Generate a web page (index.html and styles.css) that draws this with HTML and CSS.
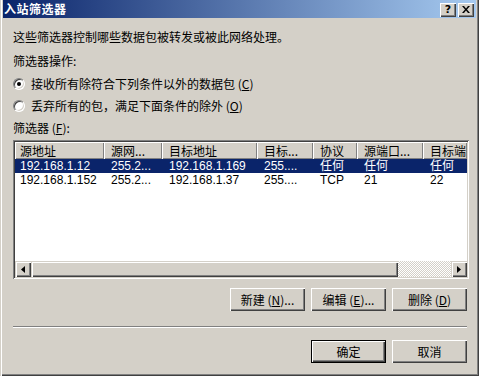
FILE: index.html
```html
<!DOCTYPE html>
<html lang="zh-CN">
<head>
    <meta charset="utf-8">
    <title>入站筛选器</title>
    <link rel="stylesheet" href="styles.css">
</head>
<body>
<div class="window">
    <div class="titlebar">
        <span class="title">入站筛选器</span>
        <div class="caption-btns">
            <span class="cbtn help">?</span>
            <span class="cbtn">
                <svg width="8" height="7" viewBox="0 0 8 7"><path d="M0 0h2l2 2.5 2-2.5h2l-3 3.5 3 3.5h-2l-2-2.5-2 2.5h-2l3-3.5z" fill="#000"/></svg>
            </span>
        </div>
    </div>

    <div class="content">
        <p class="line intro">这些筛选器控制哪些数据包被转发或被此网络处理。</p>
        <p class="line label">筛选器操作:</p>
        <div class="radio-row first">
            <span class="radio checked"></span>
            <span>接收所有除符合下列条件以外的数据包 (<u>C</u>)</span>
        </div>
        <div class="radio-row">
            <span class="radio"></span>
            <span>丢弃所有的包，满足下面条件的除外 (<u>O</u>)</span>
        </div>
        <p class="line list-label">筛选器 (<u>F</u>):</p>

        <div class="listbox">
            <div class="client">
                <div class="lv-head">
                    <span class="hcell">源地址</span>
                    <span class="hcell">源网...</span>
                    <span class="hcell">目标地址</span>
                    <span class="hcell">目标...</span>
                    <span class="hcell">协议</span>
                    <span class="hcell">源端口...</span>
                    <span class="hcell">目标端</span>
                </div>
                <div class="lv-row selected">
                    <span>192.168.1.12</span>
                    <span>255.2...</span>
                    <span>192.168.1.169</span>
                    <span>255....</span>
                    <span>任何</span>
                    <span>任何</span>
                    <span>任何</span>
                </div>
                <div class="lv-row">
                    <span>192.168.1.152</span>
                    <span>255.2...</span>
                    <span>192.168.1.37</span>
                    <span>255....</span>
                    <span>TCP</span>
                    <span>21</span>
                    <span>22</span>
                </div>
                <div class="lv-fill"></div>
                <div class="hscroll">
                    <span class="sbtn">
                        <svg width="4" height="7" viewBox="0 0 4 7"><path d="M4 0v7L0 3.5z" fill="#000"/></svg>
                    </span>
                    <span class="thumb"></span>
                    <span class="track"></span>
                    <span class="sbtn">
                        <svg width="4" height="7" viewBox="0 0 4 7"><path d="M0 0v7l4-3.5z" fill="#000"/></svg>
                    </span>
                </div>
            </div>
        </div>

        <div class="btn-row actions">
            <span class="btn">新建 (<u>N</u>)...</span>
            <span class="btn">编辑 (<u>E</u>)...</span>
            <span class="btn">删除 (<u>D</u>)</span>
        </div>
        <div class="separator"></div>
        <div class="btn-row footer">
            <span class="btn default">确定</span>
            <span class="btn">取消</span>
        </div>
    </div>
</div>
</body>
</html>
```

FILE: styles.css
```css
html{margin: 0; padding: 0;}
body{margin: 0; padding: 0; background: #d4d0c8; overflow: hidden; font-family: "Noto Sans CJK SC", "Liberation Sans", sans-serif; font-size: 12px; color: #000;}
u{text-decoration: underline; text-underline-offset: 1px;}

.window{width: 479px; height: 376px; box-sizing: border-box; background: #d4d0c8; padding: 0 3px; box-shadow: inset 1px 0 #d4d0c8, inset 2px 0 #fff, inset -1px -1px #404040, inset -2px -2px #808080;}

.titlebar{height: 18px; display: flex; align-items: center; justify-content: space-between; padding: 0 2px 0 1px; background: linear-gradient(to right, #0a246a, #a6caf0);}
.title{color: #fff; font-weight: bold; line-height: 18px; letter-spacing: 0.5px;}
.caption-btns{display: flex; gap: 2px; padding-top: 1px;}
.cbtn{width: 16px; height: 14px; box-sizing: border-box; background: #d4d0c8; display: flex; align-items: center; justify-content: center; box-shadow: inset 1px 1px #fff, inset -1px -1px #404040, inset -2px -2px #808080; font-family: "DejaVu Sans", sans-serif; font-weight: bold; font-size: 11px; line-height: 14px;}
.cbtn svg{display: block;}

.content{padding: 12px 7px 0 10px;}
.line{margin: 0; line-height: 14px; height: 14px; white-space: nowrap;}
.label{margin-top: 10px;}
.radio-row{display: flex; align-items: center; gap: 6px; height: 14px; margin-top: 8px; line-height: 14px; white-space: nowrap;}
.radio-row.first{margin-top: 9px;}
.radio{width: 12px; height: 12px; box-sizing: border-box; border-radius: 50%; background: #fff; border: 1px solid; border-color: #808080 #fff #fff #808080; box-shadow: inset 1px 1px #404040, inset -1px -1px #d4d0c8; display: flex; align-items: center; justify-content: center;}
.radio.checked::after{content: ""; width: 4px; height: 4px; border-radius: 50%; background: #000;}
.list-label{margin-top: 8px;}

.listbox{margin-top: 5px; width: 456px; height: 139px; box-sizing: border-box; padding: 2px; background: #fff; box-shadow: inset 1px 1px #808080, inset -1px -1px #fff, inset 2px 2px #404040, inset -2px -2px #d4d0c8;}
.client{height: 100%; display: flex; flex-direction: column; overflow: hidden;}
.lv-head, .lv-row{display: grid; grid-template-columns: 89px 58px 95px 56px 44px 66px 44px; white-space: nowrap;}
.lv-head{height: 17px; flex: none;}
.hcell{background: #d4d0c8; line-height: 17px; padding-left: 7px; box-shadow: inset 1px 1px #fff, inset -1px -1px #808080;}
.hcell:first-child{padding-left: 5px;}
.lv-row{height: 14px; line-height: 14px; flex: none; font-family: "Liberation Sans", "Noto Sans CJK SC", sans-serif;}
.lv-row span{padding-left: 7px;}
.lv-row span:first-child{padding-left: 5px;}
.lv-row.selected{background: #0a246a; color: #fff;}
.lv-fill{flex: 1;}

.hscroll{height: 16px; display: flex; flex: none;}
.sbtn{width: 16px; height: 16px; box-sizing: border-box; background: #d4d0c8; display: flex; align-items: center; justify-content: center; box-shadow: inset 1px 1px #d4d0c8, inset 2px 2px #fff, inset -1px -1px #404040, inset -2px -2px #808080;}
.thumb{width: 367px; background: #d4d0c8; box-shadow: inset 1px 1px #d4d0c8, inset 2px 2px #fff, inset -1px -1px #404040, inset -2px -2px #808080;}
.track{flex: 1; background: repeating-conic-gradient(#fff 0 25%, #d4d0c8 0 50%) 0 0 / 2px 2px;}

.btn-row{display: flex; justify-content: flex-end; gap: 6px; padding-right: 2px;}
.actions{margin-top: 9px;}
.footer{margin-top: 12px;}
.btn{width: 75px; height: 23px; box-sizing: border-box; display: flex; align-items: center; justify-content: center; background: #d4d0c8; white-space: nowrap; box-shadow: inset 1px 1px #fff, inset -1px -1px #404040, inset -2px -2px #808080;}
.btn.default{border: 1px solid #000;}

.separator{margin-top: 15px; margin-right: 2px; border-top: 1px solid #808080; border-bottom: 1px solid #fff; height: 0;}
```
